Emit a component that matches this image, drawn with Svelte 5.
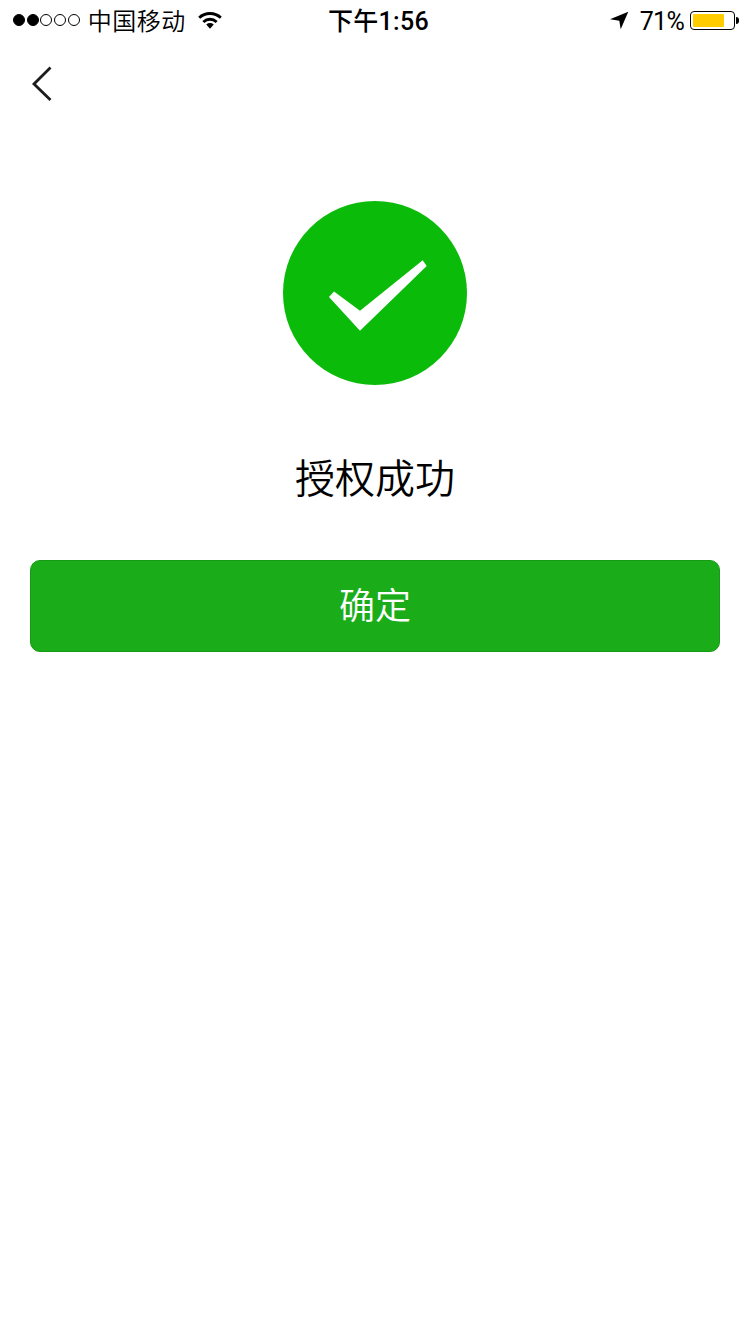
<script>
  const signal = [true, true, false, false, false];
</script>

<div class="page">
  <header class="status">
    <div class="left">
      <div class="dots">
        {#each signal as on}
          <span class="dot" class:on></span>
        {/each}
      </div>
      <span class="carrier">中国移动</span>
      <svg class="wifi" width="24" height="18" viewBox="0 0 26 20">
        <path d="M1 7.5C7.6 1.2 18.4 1.2 25 7.5" fill="none" stroke="#000" stroke-width="3.2"/>
        <path d="M5.6 12.2C10 8.2 16 8.2 20.4 12.2" fill="none" stroke="#000" stroke-width="3.2"/>
        <path d="M8.8 15C11.4 12.8 14.6 12.8 17.2 15L13 19.6Z" fill="#000"/>
      </svg>
    </div>
    <div class="time">下午1:56</div>
    <div class="right">
      <svg class="loc" width="20" height="20" viewBox="0 0 20 20">
        <path d="M18.3 1.7L0 9.3L9.3 10.7L10.7 19.3Z" fill="#000"/>
      </svg>
      <span class="pct">71%</span>
      <div class="battery">
        <div class="shell"><div class="fill"></div></div>
        <div class="nub"></div>
      </div>
    </div>
  </header>

  <nav class="nav">
    <svg width="22" height="36" viewBox="0 0 22 36">
      <path d="M20.5 1.5L4 18L20.5 34" fill="none" stroke="#1c1c1c" stroke-width="2.8"/>
    </svg>
  </nav>

  <main class="main">
    <svg class="badge" width="184" height="184" viewBox="0 0 184 184">
      <circle cx="92" cy="92" r="92" fill="#0bbb0a"/>
      <path d="M46 96L51 90.4L77 109.7L139.7 59.3L143.7 65L77 129.7Z" fill="#fff"/>
    </svg>
    <h1 class="title">授权成功</h1>
    <button class="confirm">确定</button>
  </main>
</div>

<style>
  :global(body) {
    margin: 0;
    background: #fff;
  }
  .page {
    width: 750px;
    height: 1334px;
    background: #fff;
    font-family: "Noto Sans CJK SC", "Liberation Sans", sans-serif;
    color: #000;
    overflow: hidden;
  }
  .status {
    height: 40px;
    display: grid;
    grid-template-columns: 1fr auto 1fr;
    align-items: center;
    padding: 0 11px 0 13px;
  }
  .left, .right {
    display: flex;
    align-items: center;
  }
  .right {
    justify-content: flex-end;
  }
  .dots {
    display: flex;
    gap: 1.7px;
  }
  .dot {
    width: 12px;
    height: 12px;
    border: 1.2px solid #000;
    border-radius: 50%;
    box-sizing: border-box;
  }
  .dot.on {
    background: #000;
  }
  .carrier {
    margin-left: 8px;
    font-size: 24px;
    font-weight: 350;
    letter-spacing: 0.5px;
    line-height: 40px;
  }
  .wifi {
    margin-left: 12px;
  }
  .time {
    margin: 3px 0 0 5px;
    font-family: Roboto, "Noto Sans CJK SC", sans-serif;
    font-size: 25px;
    font-weight: 500;
    letter-spacing: 0.3px;
    line-height: 37px;
  }
  .loc {
    margin-right: 10px;
  }
  .pct {
    padding-top: 4px;
    font-family: Roboto, "Liberation Sans", sans-serif;
    font-size: 25px;
    letter-spacing: -0.7px;
    line-height: 36px;
  }
  .battery {
    display: flex;
    align-items: center;
    margin-left: 6px;
  }
  .shell {
    width: 45px;
    height: 19px;
    box-sizing: border-box;
    border: 1px solid #000;
    border-radius: 4px;
    padding: 2px;
  }
  .fill {
    width: 31px;
    height: 100%;
    background: #ffcc00;
    border-radius: 1px;
  }
  .nub {
    width: 3px;
    height: 7px;
    margin-left: 1px;
    background: #000;
    border-radius: 0 3px 3px 0;
  }
  .nav {
    height: 36px;
    padding: 26px 0 0 30px;
  }
  .nav svg {
    display: block;
  }
  .main {
    display: flex;
    flex-direction: column;
    align-items: center;
    padding: 99px 30px 0;
  }
  .badge {
    display: block;
  }
  .title {
    margin: 63px 0 0;
    font-size: 40px;
    font-weight: 350;
    line-height: 56px;
  }
  .confirm {
    width: 100%;
    height: 92px;
    margin-top: 56px;
    box-sizing: border-box;
    background: #1aad19;
    border: 1px solid #179b16;
    border-radius: 10px;
    color: #fff;
    font-family: inherit;
    font-size: 36px;
    font-weight: 350;
    padding: 0 0 6px;
  }
</style>
